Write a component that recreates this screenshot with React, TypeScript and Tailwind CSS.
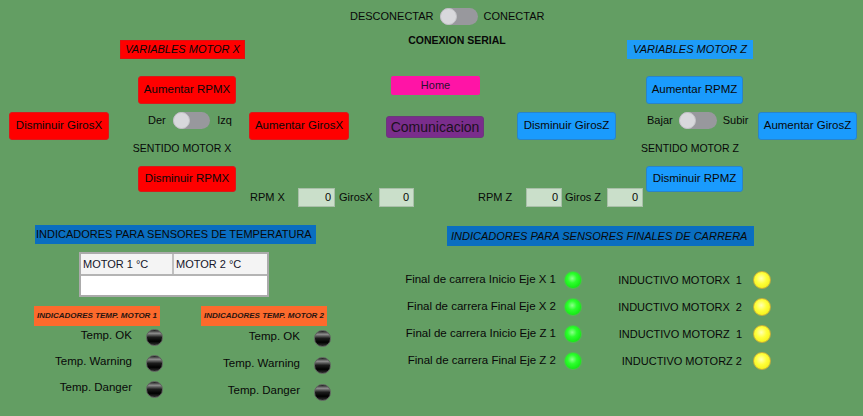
import React from "react";

// Panel de control de motores X / Z

function Toggle() {
    return (
        <div className="w-[38px] h-[17px] rounded-full bg-[#98989d] flex items-center">
            <div className="w-[17px] h-[17px] rounded-full bg-[#d8d8dc] border border-[#c4c4c8]" />
        </div>
    );
}

function LedBlack() {
    return (
        <div className="w-[17px] h-[17px] rounded-full border border-[#5f5f5f] bg-[linear-gradient(180deg,#1a1a1a_0%,#8e8e8e_22%,#1c1c1c_48%,#000_75%,#2e2e2e_100%)]" />
    );
}

function LedGreen() {
    return (
        <div className="w-[18px] h-[18px] rounded-full border border-[#4cc24c] bg-[radial-gradient(circle_at_45%_40%,#8cff8c_0%,#2cff2c_35%,#10e610_80%,#0cc00c_100%)]" />
    );
}

function LedYellow() {
    return (
        <div className="w-[18px] h-[18px] rounded-full border border-[#c7b03a] bg-[radial-gradient(circle_at_45%_40%,#ffffb4_0%,#ffff3c_40%,#f2ef12_85%,#d8c900_100%)]" />
    );
}

const tempRows = ["Temp. OK", "Temp. Warning", "Temp. Danger"];

const finales = [
    ["Final de carrera Inicio Eje X 1", "INDUCTIVO MOTORX  1"],
    ["Final de carrera Final Eje X 2", "INDUCTIVO MOTORX  2"],
    ["Final de carrera Inicio Eje Z 1", "INDUCTIVO MOTORZ  1"],
    ["Final de carrera Final Eje Z 2", "INDUCTIVO MOTORZ 2"],
];

export default function App() {
    return (
        <div className="w-[863px] h-[416px] overflow-hidden bg-[#639e63] text-[#080808] text-[11px] font-['Liberation_Sans',Arial,sans-serif] leading-none">
            {/* Conexion */}
            <div className="pt-[8px] pl-[350px] flex items-center gap-[6px] h-[25px]">
                <span>DESCONECTAR</span>
                <Toggle />
                <span>CONECTAR</span>
            </div>

            {/* Titulos */}
            <div className="mt-[9px] flex items-start">
                <div className="ml-[120px] mt-[6px] w-[125px] h-[19px] bg-[#ff0000] border border-[#e01010] flex items-center justify-center italic">
                    VARIABLES MOTOR X
                </div>
                <div className="w-[100px] ml-[162px] h-[12px] leading-[12px] text-center font-bold text-[10.5px]">
                    CONEXION SERIAL
                </div>
                <div className="ml-[120px] mt-[6px] w-[126px] h-[19px] bg-[#1e9cf8] flex items-center justify-center italic">
                    VARIABLES MOTOR Z
                </div>
            </div>

            {/* Aumentar RPM + Home */}
            <div className="mt-[17px] flex items-start">
                <button className="ml-[138px] w-[98px] h-[28px] rounded-[3px] bg-[#ff0000] border border-[#d81a1a] text-[11.5px]">
                    Aumentar RPMX
                </button>
                <button className="ml-[155px] w-[89px] h-[19px] rounded-[2px] bg-[#ff14a6] text-[11px] text-[#2a1030]">
                    Home
                </button>
                <button className="ml-[166px] w-[97px] h-[28px] rounded-[3px] bg-[#1a9bfd] border border-[#2a84c8] text-[11.5px]">
                    Aumentar RPMZ
                </button>
            </div>

            {/* Giros + sentido */}
            <div className="mt-[8px] flex items-start">
                <button className="ml-[9px] w-[100px] h-[28px] rounded-[3px] bg-[#ff0000] border border-[#d81a1a] text-[11.5px]">
                    Disminuir GirosX
                </button>
                <div className="ml-[39px] w-[84px] h-[17px] flex items-center gap-[7px]">
                    <span>Der</span>
                    <Toggle />
                    <span>Izq</span>
                </div>
                <button className="ml-[17px] w-[100px] h-[28px] rounded-[3px] bg-[#ff0000] border border-[#d81a1a] text-[11.5px]">
                    Aumentar GirosX
                </button>
                <button className="ml-[37px] mt-[4px] w-[98px] h-[22px] rounded-[3px] bg-[#7a2d8c] border border-[#6b3a7a] text-[14px] text-[#1c1020]">
                    Comunicacion
                </button>
                <button className="ml-[33px] w-[99px] h-[28px] rounded-[3px] bg-[#1a9bfd] border border-[#2a84c8] text-[11.5px]">
                    Disminuir GirosZ
                </button>
                <div className="ml-[31px] w-[103px] h-[17px] flex items-center gap-[6px]">
                    <span>Bajar</span>
                    <Toggle />
                    <span>Subir</span>
                </div>
                <button className="ml-[8px] w-[99px] h-[28px] rounded-[3px] bg-[#1a9bfd] border border-[#2a84c8] text-[11.5px]">
                    Aumentar GirosZ
                </button>
            </div>

            {/* Sentido labels */}
            <div className="mt-[2px] flex items-start h-[12px] leading-[12px] text-[10.5px]">
                <span className="ml-[130px] w-[104px] text-center">SENTIDO MOTOR X</span>
                <span className="ml-[404px] w-[104px] text-center">SENTIDO MOTOR Z</span>
            </div>

            {/* Disminuir RPM + lecturas */}
            <div className="mt-[12px] flex items-start">
                <button className="ml-[138px] w-[98px] h-[26px] rounded-[3px] bg-[#ff0000] border border-[#d81a1a] text-[11.5px]">
                    Disminuir RPMX
                </button>
                <div className="ml-[14px] mt-[22px] flex items-center h-[19px]">
                    <span className="w-[48px]">RPM X</span>
                    <div className="w-[37px] h-[19px] bg-[#cadfca] border border-[#a9bfa9] text-right pr-[3px] leading-[17px]">0</div>
                    <span className="ml-[4px] w-[40px]">GirosX</span>
                    <div className="w-[35px] h-[19px] bg-[#cadfca] border border-[#a9bfa9] text-right pr-[4px] leading-[17px]">0</div>
                </div>
                <div className="ml-[64px] mt-[22px] flex items-center h-[19px]">
                    <span className="w-[48px]">RPM Z</span>
                    <div className="w-[36px] h-[19px] bg-[#cadfca] border border-[#a9bfa9] text-right pr-[3px] leading-[17px]">0</div>
                    <span className="ml-[3px] w-[42px]">Giros Z</span>
                    <div className="w-[36px] h-[19px] bg-[#cadfca] border border-[#a9bfa9] text-right pr-[4px] leading-[17px]">0</div>
                </div>
                <button className="ml-[3px] w-[97px] h-[26px] rounded-[3px] bg-[#1a9bfd] border border-[#2a84c8] text-[11.5px]">
                    Disminuir RPMZ
                </button>
            </div>

            {/* Indicadores */}
            <div className="mt-[18px] flex items-start">
                {/* Temperatura */}
                <div className="w-[390px] flex flex-col">
                    <div className="ml-[35px] w-[281px] h-[19px] bg-[#0a6ec0] flex items-center pl-[1px]">
                        INDICADORES PARA SENSORES DE TEMPERATURA
                    </div>
                    <div className="ml-[79px] mt-[8px] w-[190px] h-[45px] border-2 border-[#ababab] bg-white flex flex-col">
                        <div className="h-[22px] flex bg-[#f4f4f4] border-b-2 border-[#b4b4b4] text-[#15152a]">
                            <div className="w-[93px] border-r-2 border-[#c0c0c0] flex items-center pl-[2px]">MOTOR 1 °C</div>
                            <div className="flex-1 flex items-center pl-[2px]">MOTOR 2 °C</div>
                        </div>
                    </div>
                    <div className="mt-[9px] flex">
                        <div className="ml-[34px] w-[126px] h-[20px] bg-[#fd6a2c] flex items-center justify-center italic font-bold text-[8px] text-[#2a1410]">
                            INDICADORES TEMP. MOTOR 1
                        </div>
                        <div className="ml-[41px] w-[126px] h-[20px] bg-[#fd6a2c] flex items-center justify-center italic font-bold text-[8px] text-[#2a1410]">
                            INDICADORES TEMP. MOTOR 2
                        </div>
                    </div>
                    <div className="mt-[2px] flex text-[11.5px]">
                        <div className="w-[163px] flex flex-col gap-[8px]">
                            {tempRows.map((t) => (
                                <div key={t} className="h-[18px] flex items-center justify-end gap-[14px]">
                                    <span className="-mt-[3px]">{t}</span>
                                    <LedBlack />
                                </div>
                            ))}
                        </div>
                        <div className="w-[168px] flex flex-col gap-[9px] mt-[1px]">
                            {tempRows.map((t) => (
                                <div key={t} className="h-[18px] flex items-center justify-end gap-[14px]">
                                    <span className="-mt-[3px]">{t}</span>
                                    <LedBlack />
                                </div>
                            ))}
                        </div>
                    </div>
                </div>

                {/* Finales de carrera */}
                <div className="flex flex-col">
                    <div className="ml-[57px] mt-[1px] w-[307px] h-[20px] bg-[#0a6ec0] flex items-center pl-[4px] italic">
                        INDICADORES PARA SENSORES FINALES DE CARRERA
                    </div>
                    <div className="mt-[25px] flex flex-col gap-[9px]">
                        {finales.map(([a, b]) => (
                            <div key={a} className="h-[18px] flex items-center">
                                <span className="w-[166px] text-right whitespace-nowrap text-[11.5px]">{a}</span>
                                <div className="ml-[8px]"><LedGreen /></div>
                                <span className="w-[160px] text-right whitespace-pre">{b}</span>
                                <div className="ml-[11px]"><LedYellow /></div>
                            </div>
                        ))}
                    </div>
                </div>
            </div>
        </div>
    );
}
